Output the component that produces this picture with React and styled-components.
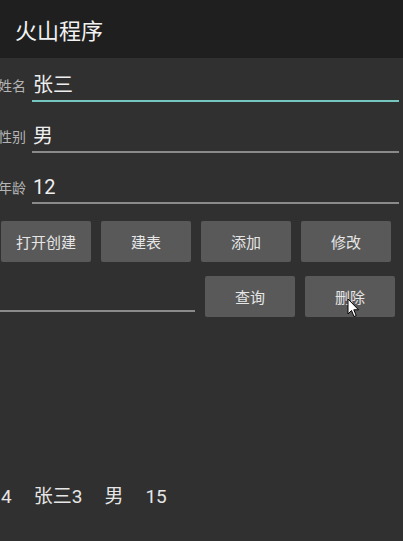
import React from "react";
import styled, { createGlobalStyle } from "styled-components";

const GlobalStyle = createGlobalStyle`
  html, body {
    margin: 0;
    padding: 0;
    background: #303030;
  }
  body {
    font-family: Roboto, "Noto Sans CJK SC", sans-serif;
    overflow: hidden;
  }
`;

const Screen = styled.div`
  position: relative;
  width: 403px;
  height: 541px;
  background: #303030;
  overflow: hidden;
`;

const Header = styled.div`
  height: 58px;
  display: flex;
  align-items: center;
  padding-left: 15px;
  background: #1f1f1f;
  color: #f2f2f2;
  font-size: 22px;
`;

const Form = styled.div`
  display: flex;
  flex-direction: column;
  gap: 13px;
  padding-top: 6px;
`;

const Row = styled.div`
  display: flex;
  align-items: flex-end;
  height: 38px;
`;

const Label = styled.span`
  margin-left: -2px;
  width: 34px;
  padding-bottom: 7px;
  color: #b4b4b4;
  font-size: 14px;
`;

const Field = styled.div`
  flex: 1;
  margin-right: 4px;
  height: 36px;
  display: flex;
  align-items: flex-end;
  padding: 0 0 5px 1px;
  box-sizing: border-box;
  border-bottom: 2px solid ${(p) => (p.$focused ? "#74c6bf" : "#8a8a8a")};
  color: #eeeeee;
  font-size: 20px;
  line-height: 1;
`;

const ButtonRow = styled.div`
  display: flex;
  gap: 10px;
  padding-left: 1px;
  margin-top: 17px;
`;

const Button = styled.div`
  width: 90px;
  height: 41px;
  display: flex;
  align-items: center;
  justify-content: center;
  border-radius: 2px;
  background: #595959;
  color: #e6e6e6;
  font-size: 15px;
`;

const QueryRow = styled.div`
  display: flex;
  gap: 10px;
  margin-top: 14px;
`;

const QueryInput = styled.div`
  width: 195px;
  height: 34px;
  border-bottom: 2px solid #8a8a8a;
`;

const Result = styled.div`
  display: flex;
  gap: 22px;
  padding-left: 1px;
  margin-top: 169px;
  color: #e6e6e6;
  font-size: 19px;
  line-height: 22px;
`;

const Cursor = styled.svg`
  position: absolute;
  left: 347px;
  top: 298px;
`;

export default function App() {
  return (
    <Screen>
      <GlobalStyle />
      <Header>火山程序</Header>
      <Form>
        <Row>
          <Label>姓名</Label>
          <Field $focused>张三</Field>
        </Row>
        <Row>
          <Label>性别</Label>
          <Field>男</Field>
        </Row>
        <Row>
          <Label>年龄</Label>
          <Field>12</Field>
        </Row>
      </Form>
      <ButtonRow>
        <Button>打开创建</Button>
        <Button>建表</Button>
        <Button>添加</Button>
        <Button>修改</Button>
      </ButtonRow>
      <QueryRow>
        <QueryInput />
        <Button>查询</Button>
        <Button>删除</Button>
      </QueryRow>
      <Result>
        <span>4</span>
        <span>张三3</span>
        <span>男</span>
        <span>15</span>
      </Result>
      <Cursor width="13" height="20" viewBox="0 0 13 20">
        <path
          d="M1 1 L1 16 L4.5 12.5 L7 18.5 L9.2 17.6 L6.8 11.8 L11.5 11.8 Z"
          fill="#ffffff"
          stroke="#000000"
          strokeWidth="1"
          strokeLinejoin="round"
        />
      </Cursor>
    </Screen>
  );
}
